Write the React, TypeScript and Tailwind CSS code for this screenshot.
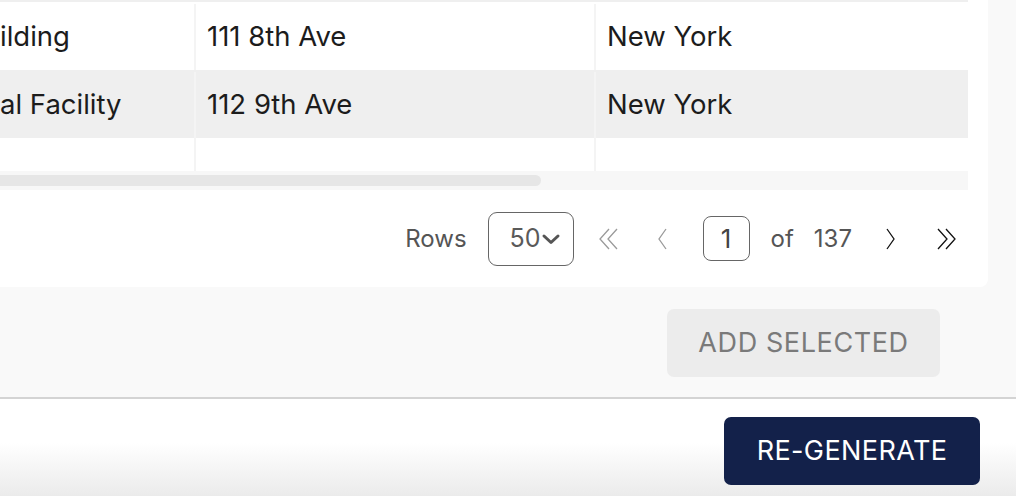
import React from 'react';

interface Row {
  name: string;
  address: string;
  city: string;
}

const rows: Row[] = [
  { name: 'ilding', address: '111 8th Ave', city: 'New York' },
  { name: 'al Facility', address: '112 9th Ave', city: 'New York' },
];

const DoubleLeft: React.FC<{ className?: string }> = ({ className }) => (
  <svg className={className} width="24" height="24" viewBox="0 0 24 24" fill="none" stroke="currentColor" strokeWidth="1.3">
    <path d="M12 2 L3 12 L12 22" />
    <path d="M20 2 L11 12 L20 22" />
  </svg>
);

const DoubleRight: React.FC<{ className?: string }> = ({ className }) => (
  <svg className={className} width="24" height="24" viewBox="0 0 24 24" fill="none" stroke="currentColor" strokeWidth="1.3">
    <path d="M4 2 L13 12 L4 22" />
    <path d="M12 2 L21 12 L12 22" />
  </svg>
);

const SingleLeft: React.FC<{ className?: string }> = ({ className }) => (
  <svg className={className} width="12" height="24" viewBox="0 0 12 24" fill="none" stroke="currentColor" strokeWidth="1.3">
    <path d="M9 2 L2 12 L9 22" />
  </svg>
);

const SingleRight: React.FC<{ className?: string }> = ({ className }) => (
  <svg className={className} width="12" height="24" viewBox="0 0 12 24" fill="none" stroke="currentColor" strokeWidth="1.3">
    <path d="M3 2 L10 12 L3 22" />
  </svg>
);

const App: React.FC = () => {
  return (
    <div
      className="w-[1016px] h-[496px] overflow-hidden flex flex-col bg-[#f9f9f9]"
      style={{ fontFamily: 'Inter, "Noto Sans", sans-serif' }}
    >
      {/* Results panel */}
      <div className="flex flex-col h-[397px]">
        <div className="w-[988px] bg-white rounded-br-lg">
          {/* Table (scrolled) */}
          <div className="w-[968px] overflow-hidden">
            <div className="h-[2px] bg-[#efefef]" />
            {rows.map((row, i) => (
              <div
                key={row.address}
                className={`flex h-[68px] items-center pt-[2px] text-[27.5px] text-[#1c1c1c] ${i % 2 === 1 ? 'bg-[#efefef]' : 'bg-white'}`}
              >
                <div className="w-[194px] h-full flex items-center whitespace-nowrap overflow-hidden">{row.name}</div>
                <div className="w-[2px] h-full bg-[#f4f4f4]" />
                <div className="w-[398px] h-full flex items-center pl-[11px]">{row.address}</div>
                <div className="w-[2px] h-full bg-[#f4f4f4]" />
                <div className="flex-1 h-full flex items-center pl-[11px]">{row.city}</div>
              </div>
            ))}
            <div className="flex h-[33px] bg-white">
              <div className="w-[194px]" />
              <div className="w-[2px] h-full bg-[#f4f4f4]" />
              <div className="w-[398px]" />
              <div className="w-[2px] h-full bg-[#f4f4f4]" />
              <div className="flex-1" />
            </div>
            {/* Horizontal scrollbar */}
            <div className="h-[19px] bg-[#f7f7f7] flex items-center">
              <div className="w-[541px] h-[11px] rounded-r-full bg-[#e6e6e6]" />
            </div>
          </div>

          {/* Pagination */}
          <div className="h-[97px] flex items-center justify-end pr-[30px] text-[24px] text-[#555]">
            <span className="mr-[21px]">Rows</span>
            <div className="w-[86px] h-[54px] border-[1.5px] border-[#666] rounded-[9px] flex items-center justify-end pr-[12px]">
              <span className="text-[25px] text-[#5a5a5a]">50</span>
              <svg width="20" height="12" viewBox="0 0 20 12" fill="none" stroke="#555" strokeWidth="3" strokeLinecap="round" strokeLinejoin="round">
                <path d="M3 3 L10 9.5 L17 3" />
              </svg>
            </div>
            <DoubleLeft className="ml-[23px] text-[#9a9a9a]" />
            <SingleLeft className="ml-[36px] text-[#9a9a9a]" />
            <div className="ml-[34px] w-[47px] h-[45px] border-[1.5px] border-[#666] rounded-[8px] flex items-center justify-center text-[26px] text-[#444]">
              1
            </div>
            <span className="ml-[21px]">of</span>
            <span className="ml-[20px]">137</span>
            <SingleRight className="ml-[32px] text-[#111]" />
            <DoubleRight className="ml-[38px] text-[#111]" />
          </div>
        </div>

        <div className="flex justify-end pr-[76px] mt-[22px]">
          <button
            type="button"
            className="w-[273px] h-[68px] rounded-[7px] bg-[#ececec] text-[#7a7a7a] text-[27px] tracking-[0.6px]"
          >
            ADD SELECTED
          </button>
        </div>
      </div>

      <div className="h-[2px] bg-[#d4d4d4]" />

      {/* Footer */}
      <div className="flex-1 flex justify-end items-start pt-[18px] pr-[36px] bg-linear-to-b from-white from-45% to-[#ebebeb]">
        <button
          type="button"
          className="w-[256px] h-[68px] rounded-[7px] bg-[#13214a] text-white text-[27px] tracking-[0.4px]"
        >
          RE-GENERATE
        </button>
      </div>
    </div>
  );
};

export default App;
